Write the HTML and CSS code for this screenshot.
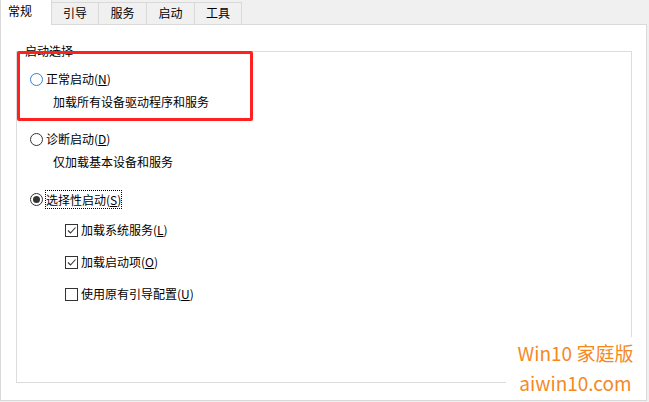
FILE: index.html
```html
<!DOCTYPE html>
<html lang="zh-CN">
<head>
<meta charset="utf-8">
<title>系统配置 - 常规</title>
<link rel="stylesheet" href="styles.css">
</head>
<body>
<div class="window">
  <div class="tabs">
    <div class="tab active">常规</div>
    <div class="tab">引导</div>
    <div class="tab">服务</div>
    <div class="tab">启动</div>
    <div class="tab">工具</div>
  </div>
  <div class="panel">
    <fieldset class="group">
      <legend class="group-title">启动选择</legend>
      <div class="opt row-first">
        <span class="radio hover"></span><span class="label">正常启动(<u>N</u>)</span>
      </div>
      <div class="desc gap-small">加载所有设备驱动程序和服务</div>
      <div class="opt gap-large">
        <span class="radio"></span><span class="label">诊断启动(<u>D</u>)</span>
      </div>
      <div class="desc gap-small">仅加载基本设备和服务</div>
      <div class="opt gap-large">
        <span class="radio checked"></span><span class="label focus">选择性启动(<u>S</u>)</span>
      </div>
      <div class="check-row gap-check-first">
        <span class="checkbox"><svg viewBox="0 0 11 11" width="11" height="11"><path d="M2 5.5 L4.5 8 L9.5 2.5" fill="none" stroke="#333" stroke-width="1.1"/></svg></span><span class="label">加载系统服务(<u>L</u>)</span>
      </div>
      <div class="check-row gap-check">
        <span class="checkbox"><svg viewBox="0 0 11 11" width="11" height="11"><path d="M2 5.5 L4.5 8 L9.5 2.5" fill="none" stroke="#333" stroke-width="1.1"/></svg></span><span class="label">加载启动项(<u>O</u>)</span>
      </div>
      <div class="check-row gap-check">
        <span class="checkbox"></span><span class="label">使用原有引导配置(<u>U</u>)</span>
      </div>
    </fieldset>
  </div>
  <div class="highlight"></div>
  <div class="watermark">
    <div>Win10 家庭版</div>
    <div>aiwin10.com</div>
  </div>
</div>
</body>
</html>
```
FILE: styles.css
```css
* { box-sizing: border-box; }
html, body {
  margin: 0;
  padding: 0;
  background: #f0f0f0;
}
body {
  width: 649px;
  height: 402px;
  overflow: hidden;
  font-family: "Noto Sans CJK SC", "Noto Sans", sans-serif;
  font-size: 12px;
  color: #000;
}
.window {
  position: relative;
  width: 649px;
  height: 402px;
}
.tabs {
  display: flex;
  align-items: flex-end;
  height: 24px;
  position: relative;
  z-index: 1;
}
.tab {
  height: 22px;
  line-height: 20px;
  text-align: center;
  background: #f0f0f0;
  border: 1px solid #d9d9d9;
  border-left: none;
  border-bottom: none;
  width: 47px;
}
.tab:nth-child(3), .tab:nth-child(4) { width: 48px; }
.tab.active {
  width: 52px;
  height: 25px;
  margin-bottom: -1px;
  line-height: 22px;
  background: #fff;
  border-left: 1px solid #d9d9d9;
  border-top: none;
  text-align: left;
  padding-left: 7px;
}
.panel {
  width: 647px;
  height: 377px;
  background: #fff;
  border: 1px solid #d9d9d9;
  display: flex;
  flex-direction: column;
}
.group {
  flex: 1;
  margin: 19px 14px 17px 15px;
  padding: 0;
  min-width: 0;
  border: 1px solid #dcdcdc;
  display: flex;
  flex-direction: column;
}
.group-title {
  margin-left: 7px;
  padding: 0 1px;
  line-height: 14px;
  font-size: 12px;
}
.opt, .check-row {
  display: flex;
  align-items: center;
  height: 20px;
  line-height: 20px;
}
.opt { padding-left: 13px; }
.check-row { padding-left: 48px; }
.row-first { margin-top: 11px; }
.gap-small { margin-top: 3px; }
.gap-large { margin-top: 17px; }
.gap-check-first { margin-top: 11px; }
.gap-check { margin-top: 12px; }
.desc {
  padding-left: 36px;
  height: 20px;
  line-height: 20px;
}
.radio {
  width: 13px;
  height: 13px;
  border-radius: 50%;
  border: 1px solid #333;
  margin-right: 3px;
  display: flex;
  align-items: center;
  justify-content: center;
  flex: none;
}
.radio.hover { border-color: #2b86de; }
.radio.checked::after {
  content: "";
  width: 7px;
  height: 7px;
  border-radius: 50%;
  background: #333;
}
.label u { text-decoration: underline; text-underline-offset: 1px; }
.label.focus {
  border: 1px dotted #000;
  line-height: 17px;
  padding: 0;
  margin-left: -1px;
}
.checkbox {
  width: 13px;
  height: 13px;
  border: 1px solid #333;
  margin-right: 3px;
  display: flex;
  align-items: center;
  justify-content: center;
  flex: none;
}
.checkbox svg { display: block; }
.highlight {
  position: absolute;
  left: 17px;
  top: 51px;
  width: 236px;
  height: 70px;
  border: 3px solid #ff2020;
  border-radius: 2px;
}
.watermark {
  position: absolute;
  left: 506px;
  top: 337px;
  width: 139px;
  height: 62px;
  background: #fff;
  color: #f5891f;
  font-size: 19px;
  line-height: 30px;
  text-align: center;
  padding-top: 1px;
}
```
